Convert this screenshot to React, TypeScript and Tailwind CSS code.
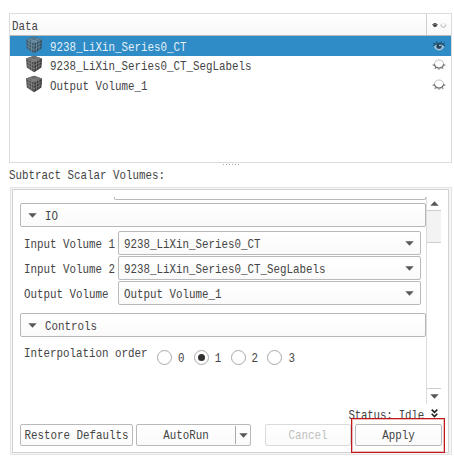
import type { ReactNode } from "react";

function Txt({ children, className = "" }: { children: ReactNode; className?: string }) {
  return (
    <span className={`inline-block origin-center scale-y-[1.22] whitespace-pre leading-[14px] ${className}`}>
      {children}
    </span>
  );
}

function Cube({ selected = false }: { selected?: boolean }) {
  return (
    <svg width="18" height="18" viewBox="0 0 18 18" className="shrink-0 -translate-x-px -translate-y-px">
      <path d="M9 .8 17 3.6 16.2 12.5 9 17.2 1.8 12.5 1 3.6Z" fill={selected ? "#3d5a6d" : "#505050"} />
      <path d="M9 .8 17 3.6 9 7.2 1 3.6Z" fill={selected ? "#52788e" : "#6c6c6c"} />
      <path d="M9 7.2 17 3.6 16.2 12.5 9 17.2Z" fill={selected ? "#304d5f" : "#3a3a3a"} />
      <path
        d="M4 4.9V13.9M6.5 6V15.5M11.5 6V15.5M14 4.9V13.9M1.3 6.6 9 10.4 16.7 6.6M1.6 9.6 9 13.8 16.4 9.6M3.7 2.7 11.5 6M14.3 2.7 6.5 6"
        stroke={selected ? "#86a3b4" : "#989898"}
        strokeWidth=".55"
        fill="none"
      />
      <path d="M9 7.2V17M1 3.6 9 7.2 17 3.6" stroke={selected ? "#7895a6" : "#8b8b8b"} strokeWidth=".6" fill="none" />
    </svg>
  );
}

function OpenEye() {
  return (
    <svg width="14" height="12" viewBox="0 0 14 12" className="block">
      <path d="M1.5 6Q7 1.5 12.5 6 10.5 10.5 7 10.5T1.5 6Z" fill="#9fc3d8" />
      <path d="M1 6Q7 .3 13 6M2.8 4.2 1.5 2.8M5 2.8 4.5 1.3M9 2.8 9.5 1.3M11.2 4.2 12.5 2.8" stroke="#22506e" strokeWidth="1.1" fill="none" />
      <circle cx="7" cy="6.2" r="2.6" fill="#1f4257" />
      <circle cx="8" cy="5.3" r=".9" fill="#c8dde9" />
    </svg>
  );
}

function ClosedEye() {
  return (
    <svg width="14" height="12" viewBox="0 0 14 12" className="block">
      <path d="M2.3 5.2Q3 1 7 1T11.7 5.2" stroke="#c2c2c2" strokeWidth="1" fill="none" />
      <path d="M2.2 5Q3.2 9 7 9T11.8 5" stroke="#757575" strokeWidth="1.2" fill="none" />
      <path d="M2.6 6.3.6 6M4 8.2 2.9 9.8M7 9V10.8M10 8.2 11.1 9.8M11.4 6.3 13.4 6" stroke="#858585" strokeWidth="1.2" fill="none" />
    </svg>
  );
}

function Tri({ up = false }: { up?: boolean }) {
  return (
    <svg width="9" height="5" viewBox="0 0 9 5" className="shrink-0">
      <path d={up ? "M.3 4.7H8.7L4.5.3Z" : "M.3.3H8.7L4.5 4.7Z"} fill="#575757" />
    </svg>
  );
}

function Row({ name, selected = false }: { name: string; selected?: boolean }) {
  return (
    <div className={`flex h-[19.6px] items-center pr-[5px] pl-4 ${selected ? "bg-[#308cc6] text-[#e4f1fa]" : ""}`}>
      <Cube selected={selected} />
      <Txt className="ml-[6px] translate-y-px">{name}</Txt>
      <span className="ml-auto">{selected ? <OpenEye /> : <ClosedEye />}</span>
    </div>
  );
}

function Group({ title }: { title: string }) {
  return (
    <div className="flex h-6 w-[406px] items-center rounded-[2px] border border-[#b7b7b7] bg-linear-to-b from-white to-[#fafafa] pl-[7px]">
      <Tri />
      <Txt className="ml-[8px] translate-y-px">{title}</Txt>
    </div>
  );
}

function Field({ label, value }: { label: string; value: string }) {
  return (
    <div className="flex h-[25px] items-start">
      <div className="flex h-6 w-[94px] items-center">
        <Txt className="translate-y-px">{label}</Txt>
      </div>
      <div className="flex h-6 w-[303px] items-center justify-between rounded-[2px] border border-[#b9b9b9] bg-linear-to-b from-white to-[#fafafa] pr-[6px] pl-[5px]">
        <Txt className="translate-y-px">{value}</Txt>
        <Tri />
      </div>
    </div>
  );
}

function Radio({ label, checked = false }: { label: string; checked?: boolean }) {
  return (
    <div className="flex w-[36.8px] items-center">
      <span className="flex size-[15px] items-center justify-center rounded-full border border-[#a9a9a9] bg-white">
        {checked && <span className="size-[7px] rounded-full bg-[#303030]" />}
      </span>
      <Txt className="ml-[6px]">{label}</Txt>
    </div>
  );
}

const button =
  "flex h-[22px] items-center justify-center rounded-[2px] border border-[#b9b9b9] bg-linear-to-b from-white to-[#fafafa]";

export default function App() {
  return (
    <main className="relative h-[457px] w-[454px] overflow-hidden bg-white pt-[13px] pl-[9px] font-['Liberation_Mono',monospace] text-[10.83px] text-[#444]">
      <section className="h-[150px] w-[443px] border border-[#dcdcdc]">
        <div className="flex h-[22px] border-b border-[#b9b9b9] bg-linear-to-b from-white to-[#f8f8f8]">
          <div className="flex w-[417px] items-center border-r border-[#cfcfcf] pl-[2px]">
            <Txt className="translate-y-px">Data</Txt>
          </div>
          <div className="flex flex-1 items-center justify-center">
            <svg width="16" height="8" viewBox="0 0 16 8">
              <ellipse cx="4" cy="4" rx="2" ry="1.9" fill="#333" />
              <path d="M1 3.6H7" stroke="#777" />
              <path d="M9.7 3.5Q10 6.3 12.3 6.3T15 3.5" stroke="#aaa" strokeWidth=".9" fill="none" />
              <path d="M9.7 3.5Q12.3 1 15 3.5" stroke="#ddd" strokeWidth=".7" fill="none" />
            </svg>
          </div>
        </div>
        <Row name="9238_LiXin_Series0_CT" selected />
        <Row name="9238_LiXin_Series0_CT_SegLabels" />
        <Row name="Output Volume_1" />
      </section>

      <div className="flex h-[5px] justify-center gap-[2px] pt-[1px] pr-[1px]">
        {[0, 1, 2, 3, 4, 5].map((i) => (
          <span key={i} className="size-px bg-[#aaa]" />
        ))}
      </div>
      <div className="flex h-[19px] items-start">
        <Txt>Subtract Scalar Volumes:</Txt>
      </div>

      <section className="ml-px h-[268px] w-[442px] border border-[#e4e4e4] bg-[#f5f5f5] p-[1px]">
        <div className="h-[264px] w-[437px] border border-[#d2d2d2] bg-white pt-[7px] pl-[7px]">
          <div className="flex h-[207px]">
            <div className="w-[406px]">
              <div className="ml-[94px] h-[3px] w-[312px] rounded-b-[2px] border border-t-0 border-[#b9b9b9]" />
              <div className="h-[3px]" />
              <Group title="IO" />
              <div className="pt-[4px] pl-[4px]">
                <Field label="Input Volume 1" value="9238_LiXin_Series0_CT" />
                <Field label="Input Volume 2" value="9238_LiXin_Series0_CT_SegLabels" />
                <Field label="Output Volume" value="Output Volume_1" />
              </div>
              <div className="h-[7px]" />
              <Group title="Controls" />
              <div className="flex pl-[4px]">
                <Txt className="mt-[10px] w-[133px]">Interpolation order</Txt>
                <div className="mt-[13px] flex">
                  <Radio label="0" />
                  <Radio label="1" checked />
                  <Radio label="2" />
                  <Radio label="3" />
                </div>
              </div>
            </div>
            <div className="flex w-[15px] flex-col border-l border-[#dcdcdc]">
              <div className="flex h-[13px] items-center justify-center"><Tri up /></div>
              <div className="h-[33px] border-y border-[#cdcdcd] bg-[#f3f3f3]" />
              <div className="mt-auto flex h-[16px] items-center justify-center border-t border-[#cdcdcd]"><Tri /></div>
            </div>
          </div>
          <div className="flex h-[20px] w-[420px] items-center justify-end">
            <Txt className="translate-y-px tracking-[-0.2px]">Status: Idle</Txt>
            <svg width="7" height="9" viewBox="0 0 7 9" className="mr-[2px] ml-[7px] -translate-y-px">
              <path d="M.7.7 3.5 3.4 6.3.7M.7 4.7 3.5 7.5 6.3 4.7" stroke="#202020" strokeWidth="1.6" fill="none" />
            </svg>
          </div>
          <div className="flex">
            <div className={`${button} w-[113px]`}><Txt>Restore Defaults</Txt></div>
            <div className={`${button} ml-[3px] w-[115px]`}>
              <div className="flex flex-1 justify-center"><Txt>AutoRun</Txt></div>
              <div className="flex h-[18px] w-[15px] items-center justify-center border-l border-[#aaa]"><Tri /></div>
            </div>
            <div className={`${button} ml-[14px] w-[86px] border-[#dadada]! text-[#c0c0c0]`}><Txt>Cancel</Txt></div>
            <div className={`${button} ml-[4px] w-[87px]`}><Txt>Apply</Txt></div>
          </div>
        </div>
      </section>
      <div className="pointer-events-none absolute top-[418px] left-[351px] h-[35px] w-[94px] border-[1.5px] border-[#c01818] outline outline-[#c01818]/30 -outline-offset-2" />
    </main>
  );
}
